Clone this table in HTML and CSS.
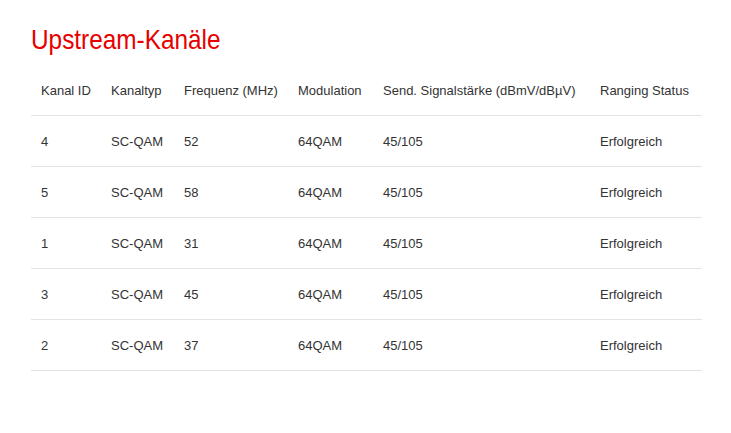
FILE: index.html
```html
<!DOCTYPE html>
<html lang="de">
<head>
<meta charset="utf-8">
<link rel="stylesheet" href="styles.css">
</head>
<body>
<main class="page">
  <h1 class="title"><span class="title-text">Upstream-Kanäle</span></h1>
  <table class="channels">
    <colgroup>
      <col class="c1"><col class="c2"><col class="c3"><col class="c4"><col class="c5"><col class="c6">
    </colgroup>
    <thead>
      <tr><th>Kanal ID</th><th>Kanaltyp</th><th>Frequenz (MHz)</th><th>Modulation</th><th>Send. Signalstärke (dBmV/dBµV)</th><th>Ranging Status</th></tr>
    </thead>
    <tbody>
      <tr><td>4</td><td>SC-QAM</td><td>52</td><td>64QAM</td><td>45/105</td><td>Erfolgreich</td></tr>
      <tr><td>5</td><td>SC-QAM</td><td>58</td><td>64QAM</td><td>45/105</td><td>Erfolgreich</td></tr>
      <tr><td>1</td><td>SC-QAM</td><td>31</td><td>64QAM</td><td>45/105</td><td>Erfolgreich</td></tr>
      <tr><td>3</td><td>SC-QAM</td><td>45</td><td>64QAM</td><td>45/105</td><td>Erfolgreich</td></tr>
      <tr><td>2</td><td>SC-QAM</td><td>37</td><td>64QAM</td><td>45/105</td><td>Erfolgreich</td></tr>
    </tbody>
  </table>
</main>
</body>
</html>
```
FILE: styles.css
```css
html, body { margin: 0; padding: 0; background: #fff; }
.page { padding: 22px 29px 0 31px; }
.title {
  margin: 0;
  font-family: "Liberation Sans", Arial, sans-serif;
  font-weight: normal;
  font-size: 28px;
  line-height: 36px;
  color: #e60000;
}
.title-text {
  display: inline-block;
  transform: scaleX(0.87);
  transform-origin: left center;
}
.channels {
  width: 671px;
  margin-top: 7px;
  border-collapse: collapse;
  font-family: "Liberation Sans", Arial, sans-serif;
  font-size: 13px;
  color: #333;
}
.c1 { width: 70px; } .c2 { width: 73px; } .c3 { width: 114px; }
.c4 { width: 85px; } .c5 { width: 217px; } .c6 { width: 112px; }
.channels th, .channels td {
  text-align: left;
  font-weight: normal;
  padding: 1px 0 0 10px;
  height: 49px;
  border-bottom: 1px solid #e3e3e3;
  white-space: nowrap;
}
```
